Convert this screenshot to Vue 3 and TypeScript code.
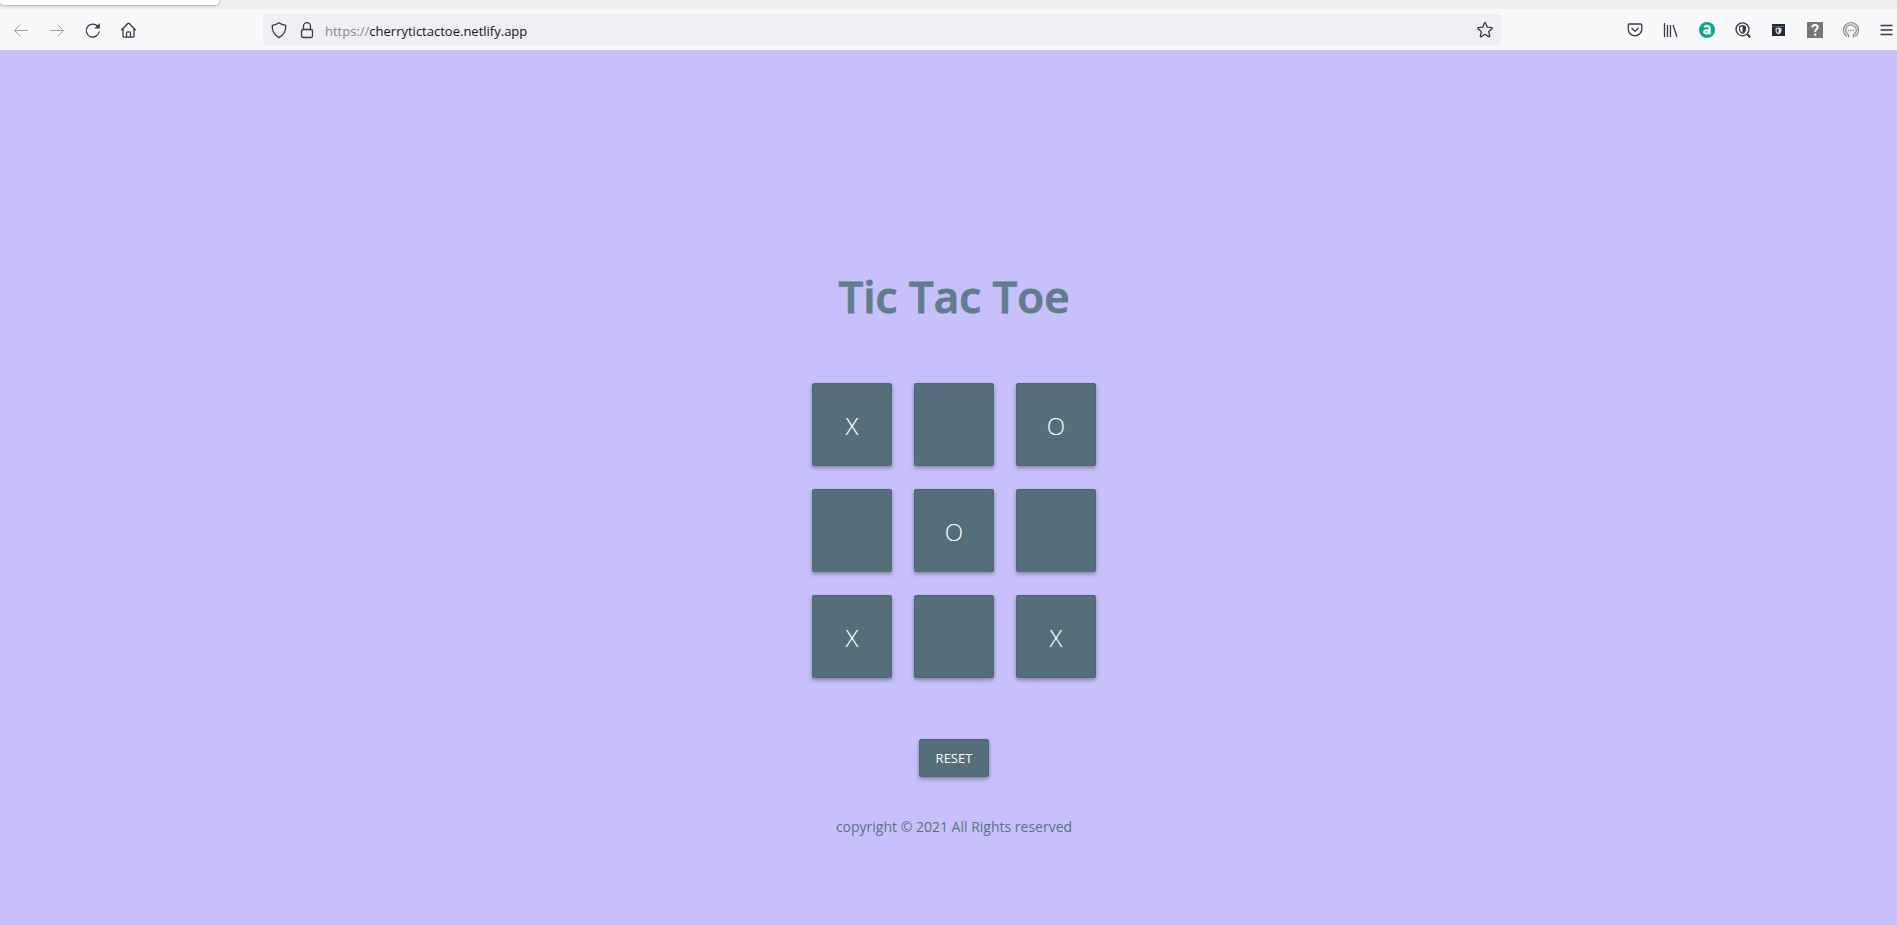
<script setup lang="ts">
import { computed, ref } from 'vue'

type Mark = 'X' | 'O' | ''

const board = ref<Mark[]>(['X', '', 'O', '', 'O', '', 'X', '', 'X'])
const address = ref<string>('cherrytictactoe.netlify.app')

const nextMark = computed<Mark>(() => {
  const played = board.value.filter((mark) => mark !== '').length
  return played % 2 === 0 ? 'X' : 'O'
})

function play(index: number): void {
  if (board.value[index] === '') {
    board.value[index] = nextMark.value
  }
}

function reset(): void {
  board.value = Array<Mark>(9).fill('')
}
</script>

<template>
  <div class="browser">
    <div class="tab-strip"><div class="tab"></div></div>
    <header class="toolbar">
      <nav class="group" aria-label="Navigation">
        <button class="tool faded" type="button" aria-label="Back">
          <svg viewBox="0 0 16 16"><path d="M15 8.500H1.500M7.500 2.500l-6 6 6 6" /></svg>
        </button>
        <button class="tool faded" type="button" aria-label="Forward">
          <svg viewBox="0 0 16 16"><path d="M1 8.500h13.500M8.500 2.500l6 6-6 6" /></svg>
        </button>
        <button class="tool" type="button" aria-label="Reload">
          <svg viewBox="0 0 16 16">
            <path class="bold" d="M14.200 9.500A6.500 6.500 0 1 1 12.600 4.200" />
            <path class="solid" d="M14.800 1v5.400H9.400z" />
          </svg>
        </button>
        <button class="tool" type="button" aria-label="Home">
          <svg viewBox="0 0 16 16">
            <path class="bold" d="M.3 8.200 6.800 1.500q.7-.7 1.400 0l6.500 6.700M2 7v7q0 1.200 1.200 1.200h8.600q1.200 0 1.200-1.200V7M5.500 15v-4q0-1.200 1.200-1.200h1.600Q9.500 9.800 9.500 11v4" />
          </svg>
        </button>
      </nav>

      <div class="address-bar">
        <button class="tool" type="button" aria-label="Tracking protection">
          <svg viewBox="0 0 16 16">
            <path class="bold" d="M8 .8c2 1.500 4 2.200 6 2.400q.8.1.8.900C14.800 9 13 13 8 15.600 3 13 1.200 9 1.200 4.100q0-.8.8-.9C4 3 6 2.300 8 .8z" />
          </svg>
        </button>
        <button class="tool" type="button" aria-label="Connection security">
          <svg viewBox="0 0 16 16">
            <rect class="bold" x="2.500" y="7.500" width="11" height="8" rx="1.500" />
            <path class="bold" d="M4.500 7.500V4.200a3.500 3.500 0 0 1 7 0v3.300" />
          </svg>
        </button>
        <label class="address">
          <span class="scheme">https://</span>
          <input v-model="address" class="address-input" type="text" aria-label="Address" spellcheck="false" />
        </label>
        <button class="tool" type="button" aria-label="Bookmark this page">
          <svg viewBox="0 0 16 16">
            <path class="bold" d="M7.400 1.200q.6-1 1.200 0l1.700 4 4.300.4q1.100.2.4 1.100l-3.300 2.900 1 4.300q.1 1.200-.9.7L8 12.300l-3.800 2.300q-1 .5-.9-.7l1-4.300L1 6.700q-.7-.9.4-1.100l4.300-.4z" />
          </svg>
        </button>
      </div>

      <div class="group">
        <button class="tool" type="button" aria-label="Save to Pocket">
          <svg viewBox="0 0 16 16">
            <path class="bold" d="M2.500 2h11q1.300 0 1.300 1.300V7a6.800 6.800 0 0 1-13.600 0V3.300Q1.200 2 2.500 2zM4.500 6 8 9.200 11.500 6" />
          </svg>
        </button>
        <button class="tool" type="button" aria-label="Library">
          <svg viewBox="0 0 16 16"><path class="bold" d="M1.500 1v14M4.500 3v12M7.500 3v12M10 3l4 12" /></svg>
        </button>
        <button class="tool" type="button" aria-label="Price assistant">
          <svg viewBox="0 0 16 16">
            <circle cx="8" cy="8" r="8" fill="#0aa596" stroke="none" />
            <path d="M5.200 5.200Q6 4 8 4q2.600 0 2.600 2.500V12.500" stroke="#fff" stroke-width="2.300" />
            <ellipse cx="7.500" cy="9.800" rx="2.300" ry="1.600" stroke="#fff" stroke-width="2" />
          </svg>
        </button>
        <button class="tool" type="button" aria-label="Private search">
          <svg viewBox="0 0 16 16">
            <circle class="bold" cx="7.500" cy="7.300" r="6.500" />
            <path d="M12 12l3.300 3.300" stroke-width="2" />
            <path d="M7.500 3 11 4v3.200q0 3.200-3.500 4.900Q4 10.400 4 7.200V4z" class="solid" />
            <path d="M7.500 4.300 5.100 5v2.300q0 2.200 2.400 3.500z" fill="#fff" stroke="none" />
          </svg>
        </button>
        <button class="tool" type="button" aria-label="Private window">
          <svg viewBox="0 0 16 16">
            <path d="M1 2h13v12H1z" fill="#1f2937" stroke="none" />
            <path d="M1.500 4.500h12" stroke="#5c6470" />
            <path d="M7.500 5.500l3 .8v2.500q0 2.200-3 3.700-3-1.500-3-3.700V6.300z" fill="#dfe3e8" stroke="none" />
            <path d="M7.500 6.800 5.600 7.300v1.500q0 1.400 1.900 2.400z" fill="#1f2937" stroke="none" />
          </svg>
        </button>
        <button class="tool" type="button" aria-label="Help">
          <svg viewBox="0 0 16 16">
            <path d="M0 0h16v16H0z" fill="#777" stroke="none" />
            <path d="M5.300 5.500Q5.300 3 8 3t2.700 2.300C10.700 7.300 8 7.300 8 10" stroke="#fff" stroke-width="2" />
            <path d="M7 11.500h2.200v2.200H7z" fill="#fff" stroke="none" />
          </svg>
        </button>
        <button class="tool muted" type="button" aria-label="Account">
          <svg viewBox="0 0 16 16">
            <path class="bold" d="M4 14.500A7.500 7.500 0 1 1 12 14.500M5 12.500A5.300 5.300 0 1 1 11 12.500M5.500 12v3.500M10.500 12v3.500" />
            <path d="M4.900 8.500h1.500M7.300 8.500h1.500M9.700 8.500h1.500" stroke-width="1.600" />
          </svg>
        </button>
        <button class="tool" type="button" aria-label="Open menu">
          <svg viewBox="0 0 16 16"><path class="bold" d="M1.500 3.500h12M1.500 8h12M1.500 12.500h12" /></svg>
        </button>
      </div>
    </header>

    <main class="page">
      <h1 class="title">Tic Tac Toe</h1>
      <div class="board">
        <button
          v-for="(mark, index) in board"
          :key="index"
          class="raised tile"
          type="button"
          :aria-label="`Square ${index + 1} ${mark}`"
          @click="play(index)"
        >{{ mark }}</button>
      </div>
      <button class="raised reset" type="button" @click="reset">RESET</button>
      <footer class="copyright">copyright © 2021 All Rights reserved</footer>
    </main>
  </div>
</template>

<style>
body {
  margin: 0;
  background: #c8c0fc;
}
</style>

<style scoped>
.browser {
  display: flex;
  flex-direction: column;
  min-height: 100vh;
  font-family: "Open Sans", "Noto Sans", sans-serif;
}

.tab-strip {
  height: 9px;
  background: #efefef;
}

.tab {
  width: 219px;
  height: 5px;
  border-radius: 0 0 4px 4px;
  background: #fff;
  box-shadow: 0 0 3px rgba(0, 0, 0, 0.5);
}

.toolbar {
  display: flex;
  align-items: center;
  gap: 126px;
  height: 41px;
  padding: 0 2px 0 13px;
  border-bottom: 1px solid #cccccf;
  background: #f9f9fb;
}

.group {
  display: flex;
  gap: 20px;
}

.tool {
  display: block;
  flex: none;
  width: 16px;
  height: 16px;
  padding: 0;
  border: 0;
  background: none;
  color: #3a3944;
}

.tool svg {
  display: block;
  width: 16px;
  height: 16px;
  fill: none;
  stroke: currentColor;
  overflow: visible;
}

.tool .bold {
  stroke-width: 1.3;
  stroke-linejoin: round;
}

.tool .solid {
  fill: currentColor;
  stroke: none;
}

.faded {
  color: #a4a4aa;
}

.muted {
  color: #8d8d8d;
}

.address-bar {
  display: flex;
  flex: 1;
  align-items: center;
  gap: 12px;
  height: 32px;
  padding: 0 8px;
  border-radius: 4px;
  background: #f0f0f4;
}

.address {
  display: flex;
  flex: 1;
  align-items: center;
  margin-left: -2px;
  padding-top: 2px;
  font-size: 13px;
  line-height: 20px;
}

.scheme {
  color: #85858c;
}

.address-input {
  flex: 1;
  min-width: 0;
  padding: 0;
  border: 0;
  outline: 0;
  background: none;
  color: #15141a;
  font: inherit;
}

.page {
  display: flex;
  flex: 1;
  flex-direction: column;
  align-items: center;
  padding: 209px 0 80px 11px;
  background: #c8c0fc;
  color: #607d8b;
}

.title {
  margin: 0;
  font-size: 44px;
  font-weight: 600;
  line-height: 72px;
  -webkit-text-stroke: 1px currentColor;
}

.board {
  display: grid;
  grid-template-columns: repeat(3, 80px);
  grid-auto-rows: 83px;
  gap: 23px 22px;
  margin-top: 51px;
}

.raised {
  padding: 0;
  border: 1px solid #4c6a72;
  border-radius: 2px;
  background: #546e7a;
  box-shadow: 0 2px 4px rgba(0, 0, 0, 0.35);
  color: #fff;
  font-family: inherit;
  cursor: pointer;
}

.tile {
  padding-top: 2px;
  font-size: 24px;
  font-weight: 300;
}

.reset {
  height: 38px;
  margin-top: 61px;
  padding: 0 16px;
  font-size: 13px;
}

.copyright {
  margin-top: 38px;
  color: #57747c;
  font-size: 14px;
  line-height: 24px;
}
</style>
